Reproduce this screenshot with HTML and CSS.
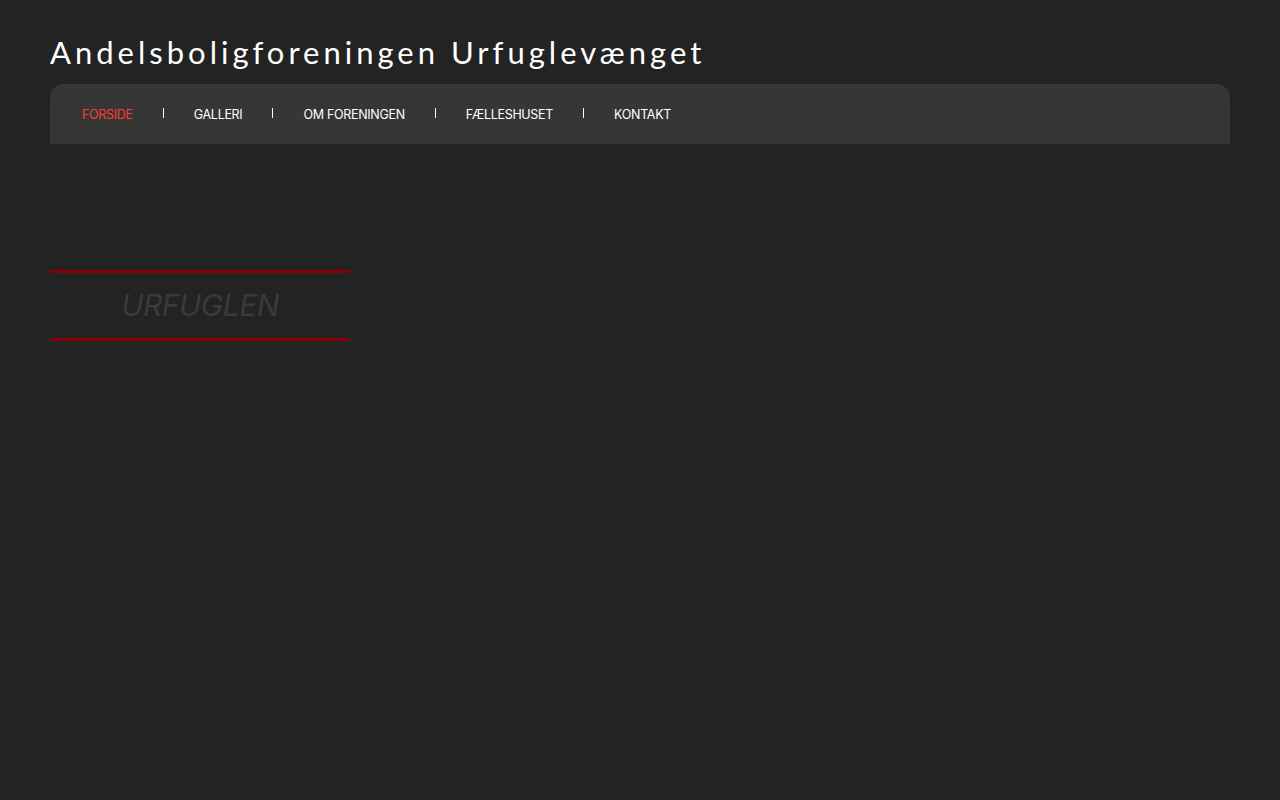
FILE: index.html
```html
<!DOCTYPE html>
<html lang="da">
<head>
<meta charset="utf-8">
<title>Andelsboligforeningen Urfuglevænget</title>
<link rel="stylesheet" href="styles.css">
</head>
<body>
<div class="page">
  <header class="site-header">
    <h1 class="site-title">Andelsboligforeningen Urfuglevænget</h1>
    <nav class="main-nav">
      <ul class="menu">
        <li class="menu-item active"><a href="#">FORSIDE</a></li>
        <li class="menu-item"><a href="#">GALLERI</a></li>
        <li class="menu-item"><a href="#">OM FORENINGEN</a></li>
        <li class="menu-item"><a href="#">FÆLLESHUSET</a></li>
        <li class="menu-item"><a href="#">KONTAKT</a></li>
      </ul>
    </nav>
  </header>
  <main class="content">
    <section class="widget">
      <h2 class="widget-title">URFUGLEN</h2>
    </section>
  </main>
</div>
</body>
</html>
```
FILE: styles.css
```css
html, body {
  margin: 0;
  padding: 0;
  background: #232323;
  height: 100%;
}

body {
  font-family: "Open Sans", "Liberation Sans", sans-serif;
  color: #ffffff;
}

.page {
  padding: 0 50px;
}

.site-header {
  padding-top: 33px;
}

.site-title {
  margin: 0 0 13px 0;
  font-family: "Lato", "Open Sans", sans-serif;
  font-weight: 400;
  font-size: 31px;
  line-height: 38px;
  letter-spacing: 4px;
  color: #ffffff;
}

.main-nav {
  background: #363636;
  height: 60px;
  border-radius: 14px 14px 0 0;
  display: flex;
  align-items: center;
}

.menu {
  list-style: none;
  margin: 0;
  padding: 0 0 0 32px;
  display: flex;
  align-items: center;
}

.menu-item {
  display: flex;
  align-items: center;
}

.menu-item + .menu-item::before {
  content: "";
  display: block;
  width: 1px;
  height: 10px;
  background: #ffffff;
  margin: 0 30px;
  position: relative;
  top: -1px;
}

.menu-item a {
  font-family: "Inter", "Open Sans", sans-serif;
  font-size: 12.5px;
  letter-spacing: -0.3px;
  color: #ffffff;
  text-decoration: none;
}

.menu-item.active a {
  color: #ff3b2f;
}

.content {
  padding-top: 126px;
}

.widget {
  width: 300px;
  border-top: 3px solid #8b0000;
  border-bottom: 3px solid #8b0000;
  padding: 13px 0 14px;
}

.widget-title {
  margin: 0;
  text-align: center;
  font-family: "Inter", "Open Sans", sans-serif;
  font-style: italic;
  font-weight: 400;
  font-size: 30px;
  line-height: 38px;
  letter-spacing: -0.5px;
  color: #3a3a3a;
}
```
